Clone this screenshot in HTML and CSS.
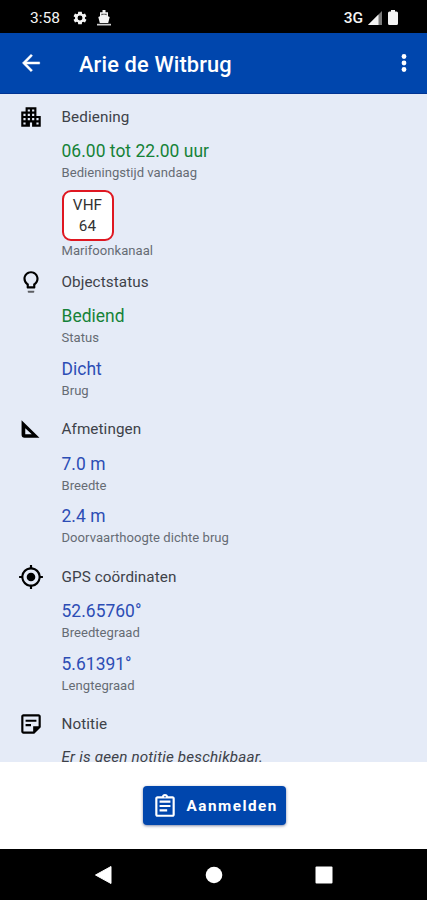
FILE: index.html
```html
<!DOCTYPE html>
<html lang="nl">
<head>
<meta charset="utf-8">
<meta name="viewport" content="width=device-width, initial-scale=1">
<title>Arie de Witbrug</title>
<link rel="stylesheet" href="styles.css">
</head>
<body>
<div class="statusbar">
  <span class="time">3:58</span>
  <svg class="gear" viewBox="0 0 24 24"><path fill-rule="evenodd" d="M19.4 13a7.500 7.500 0 0 0 0-2l2.300-1.700-2.200-3.900-2.700 1.100a8 8 0 0 0-1.700-1L14.700 2.500H9.300L8.900 5.500a8 8 0 0 0-1.700 1L4.500 5.400 2.300 9.300 4.600 11a7.500 7.500 0 0 0 0 2l-2.300 1.700 2.200 3.900 2.700-1.100a8 8 0 0 0 1.700 1l.4 3h5.400l.4-3a8 8 0 0 0 1.700-1l2.700 1.100 2.200-3.900zM12 15.700a3.700 3.700 0 1 1 0-7.400 3.700 3.700 0 0 1 0 7.400z"/></svg>
  <svg class="ship" viewBox="0 0 14 16"><path d="M5.500 0h3v2.300H11v4l1.700.8-1.500 5.900H2.800L1.300 7.100 3 6.300v-4h2.500z"/><path d="M0 13.800h14v1.700H0z" opacity=".85"/><path d="M4.300 3.700h5.400v1.600L7 4.400l-2.700.9z" fill="#555"/></svg>
  <span class="network">3G</span>
  <svg class="signal" viewBox="0 0 14 14"><path d="M0 14 14 0v14z" opacity=".5"/><path d="M0 14 10.500 3.500V14z"/></svg>
  <svg class="battery" viewBox="0 0 10 15"><path d="M3 0h4v1.500h1.500A1.500 1.500 0 0 1 10 3v10.500A1.500 1.500 0 0 1 8.500 15h-7A1.500 1.500 0 0 1 0 13.500V3a1.500 1.500 0 0 1 1.500-1.500H3z"/></svg>
</div>
<header class="appbar">
  <svg class="icon back" viewBox="0 0 24 24"><path d="M20 11H7.830l5.590-5.590L12 4l-8 8 8 8 1.410-1.410L7.830 13H20z" stroke="#fff" stroke-width=".4"/></svg>
  <h1 class="title">Arie de Witbrug</h1>
  <svg class="icon more" viewBox="0 0 24 24"><circle cx="12" cy="6" r="2.200"/><circle cx="12" cy="12" r="2.200"/><circle cx="12" cy="18" r="2.200"/></svg>
</header>
<main class="content">
  <section>
    <h2 class="head"><svg class="icon" viewBox="0 0 24 24"><path d="M17 11V3H7v4H3v14h8v-4h2v4h8V11h-4zM7 19H5v-2h2v2zm0-4H5v-2h2v2zm0-4H5V9h2v2zm4 4H9v-2h2v2zm0-4H9V9h2v2zm0-4H9V5h2v2zm4 8h-2v-2h2v2zm0-4h-2V9h2v2zm0-4h-2V5h2v2zm4 12h-2v-2h2v2zm0-4h-2v-2h2v2z"/></svg><span>Bediening</span></h2>
    <div class="item"><div class="value green hours">06.00 tot 22.00 uur</div><div class="label">Bedieningstijd vandaag</div></div>
    <div class="channel"><div class="vhf"><span>VHF</span><span>64</span></div><div class="label">Marifoonkanaal</div></div>
  </section>
  <section>
    <h2 class="head"><svg class="icon bulb" viewBox="0 0 24 24"><path d="M9 21c0 .55.45 1 1 1h4c.55 0 1-.45 1-1v-1H9v1z" opacity=".6"/><path d="M12 2C8.140 2 5 5.140 5 9c0 2.380 1.190 4.470 3 5.740V17c0 .55.45 1 1 1h6c.55 0 1-.45 1-1v-2.260c1.810-1.270 3-3.360 3-5.740 0-3.860-3.140-7-7-7zm2.850 11.100l-.85.6V16h-4v-2.300l-.85-.6A4.997 4.997 0 0 1 7 9c0-2.760 2.240-5 5-5s5 2.240 5 5c0 1.630-.8 3.160-2.150 4.100z"/></svg><span>Objectstatus</span></h2>
    <div class="item"><div class="value green">Bediend</div><div class="label">Status</div></div>
    <div class="item"><div class="value">Dicht</div><div class="label">Brug</div></div>
  </section>
  <section>
    <h2 class="head"><svg class="icon" viewBox="0 0 24 24"><path fill-rule="evenodd" d="M3.300 4 19.800 20H6a2.700 2.700 0 0 1-2.700-2.700zM6.700 11.200v5.700h6z"/></svg><span>Afmetingen</span></h2>
    <div class="item"><div class="value">7.0 m</div><div class="label">Breedte</div></div>
    <div class="item"><div class="value">2.4 m</div><div class="label">Doorvaarthoogte dichte brug</div></div>
  </section>
  <section>
    <h2 class="head"><svg class="icon" viewBox="0 0 24 24"><path d="M12 8c-2.210 0-4 1.790-4 4s1.790 4 4 4 4-1.790 4-4-1.790-4-4-4zm8.940 3A8.994 8.994 0 0 0 13 3.060V1h-2v2.060A8.994 8.994 0 0 0 3.060 11H1v2h2.060A8.994 8.994 0 0 0 11 20.940V23h2v-2.060A8.994 8.994 0 0 0 20.940 13H23v-2h-2.060zM12 19c-3.870 0-7-3.130-7-7s3.130-7 7-7 7 3.130 7 7-3.130 7-7 7z"/></svg><span>GPS coördinaten</span></h2>
    <div class="item"><div class="value">52.65760°</div><div class="label">Breedtegraad</div></div>
    <div class="item"><div class="value">5.61391°</div><div class="label">Lengtegraad</div></div>
  </section>
  <section>
    <h2 class="head"><svg class="icon" viewBox="0 0 24 24"><path d="M19 5v9h-5v5H5V5h14m0-2H5c-1.100 0-2 .9-2 2v14c0 1.100.9 2 2 2h10l6-6V5c0-1.100-.9-2-2-2zm-7 11H7v-2h5v2zm5-4H7V8h10v2z"/></svg><span>Notitie</span></h2>
    <p class="note">Er is geen notitie beschikbaar.</p>
  </section>
</main>
<footer class="footer">
  <button class="button"><svg class="icon" viewBox="0 0 24 24"><path d="M7 15h7v2H7zm0-4h10v2H7zm0-4h10v2H7zm12-4h-4.180C14.400 1.840 13.300 1 12 1s-2.400.84-2.820 2H5c-1.100 0-2 .9-2 2v15c0 1.100.9 2 2 2h14c1.100 0 2-.9 2-2V5c0-1.100-.9-2-2-2zm-7-.25c.41 0 .75.34.75.75s-.34.75-.75.75-.75-.34-.75-.75.34-.75.75-.75zM19 20H5V5h14v15z"/></svg><span>Aanmelden</span></button>
</footer>
<nav class="navbar">
  <svg viewBox="0 0 20 20"><path d="M1.500 10 17 1.500v17z" stroke="#fff" stroke-linejoin="round"/></svg>
  <svg viewBox="0 0 20 20"><circle cx="10" cy="10" r="8.300"/></svg>
  <svg viewBox="0 0 20 20"><rect x="1.500" y="1.500" width="17" height="17" rx="1"/></svg>
</nav>
</body>
</html>
```
FILE: styles.css
```css
* { box-sizing: border-box; }
body {
  margin: 0;
  height: 900px;
  display: flex;
  flex-direction: column;
  overflow: hidden;
  font-family: Roboto, "Liberation Sans", sans-serif;
  background: #fff;
}
svg { display: block; fill: currentColor; flex: none; }
.icon { width: 26px; height: 26px; }
.statusbar {
  height: 33px;
  flex: none;
  display: flex;
  align-items: center;
  padding: 2px 29px 0 30px;
  background: #000;
  color: #f4f4f4;
  font-size: 15.500px;
  font-weight: 500;
}
.time { width: 31px; font-weight: 400; }
.gear { width: 16px; height: 16px; margin-left: 11px; }
.ship { width: 14px; height: 16px; margin-left: 9px; }
.network { margin-left: auto; }
.signal { width: 14px; height: 14px; margin-left: 5px; }
.battery { width: 10px; height: 15px; margin-left: 6px; }
.appbar {
  height: 61px;
  flex: none;
  display: flex;
  align-items: center;
  padding: 0 10px 0 18px;
  background: #0046ad;
  border-bottom: 1px solid #003493;
  color: #fff;
}
.title { margin: 4px 0 0 35px; font-size: 21.800px; font-weight: 500; line-height: 28px; letter-spacing: .15px; }
.more { margin-left: auto; }
.content {
  height: 668px;
  flex: none;
  overflow: hidden;
  padding-top: 1px;
  background: #e5ebf7;
}
.head {
  height: 43px;
  margin: 0;
  padding-left: 18px;
  display: flex;
  align-items: center;
  gap: 17.500px;
  color: #000;
  font-size: 15.250px;
  font-weight: 400;
  letter-spacing: .08px;
}
.head span { color: #3e4249; }
.item { height: 52.250px; padding: 2px 0 0 61.500px; }
.value { color: #2c4db5; font-size: 17.430px; line-height: 23px; letter-spacing: .04px; }
.green { color: #158238; }
.label { color: #666b74; font-size: 13.070px; line-height: 20px; letter-spacing: .03px; }
.channel { height: 70px; padding-left: 61.500px; }
.vhf {
  width: 52px;
  height: 51px;
  display: flex;
  flex-direction: column;
  align-items: center;
  justify-content: center;
  padding-top: 1px;
  border: 2px solid #df1721;
  border-radius: 9px;
  background: #fff;
  color: #333;
  font-size: 15.250px;
  line-height: 21.500px;
  letter-spacing: .1px;
}
.note { margin: 0 0 0 61.500px; color: #3e4249; font-size: 15.250px; font-style: italic; line-height: 22px; letter-spacing: .17px; }
.footer { height: 87px; flex: none; display: flex; justify-content: center; align-items: center; background: #fff; }
.button {
  width: 143px;
  height: 39px;
  display: flex;
  align-items: center;
  gap: 9px;
  padding: 0 9px;
  border: 0;
  border-radius: 4px;
  background: #0046ad;
  box-shadow: 0 1px 3px rgba(0, 20, 80, .5);
  color: #fff;
  font-family: inherit;
  font-size: 15.250px;
  font-weight: 700;
  letter-spacing: 1.500px;
}
.footer .button { margin-left: 1px; }
.navbar { height: 51px; flex: none; display: flex; justify-content: center; gap: 90px; align-items: center; background: #000; color: #fff; }
.navbar svg { width: 20px; height: 20px; }
```
